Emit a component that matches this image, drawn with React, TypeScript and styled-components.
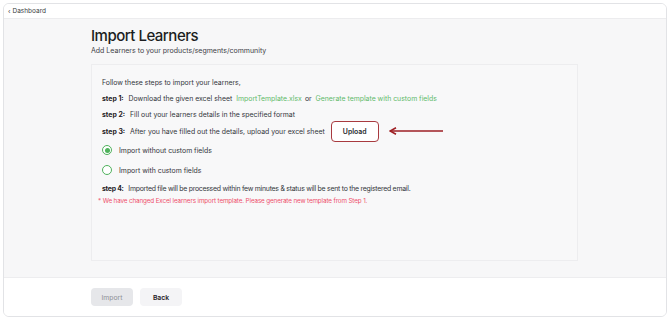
import React from "react";
import styled, { createGlobalStyle } from "styled-components";

const Global = createGlobalStyle`
  html, body { margin: 0; padding: 0; background: #ffffff; }
  body { font-family: Inter, "Noto Sans", Arial, sans-serif; color: #1f2328; }
  * { box-sizing: border-box; }
`;

const Frame = styled.div`
  margin: 3px;
  width: 664px;
  height: 314px;
  border: 1px solid #e2e3e6;
  border-radius: 6px;
  overflow: hidden;
  display: flex;
  flex-direction: column;
  background: #ffffff;
`;

const TopBar = styled.div`
  height: 15px;
  flex: none;
  display: flex;
  align-items: center;
  padding-left: 4px;
  font-size: 6.5px;
  color: #3a3d42;
  background: #ffffff;
  border-bottom: 1px solid #ececee;
  gap: 2px;
`;

const Main = styled.div`
  flex: 1;
  background: #f7f7f8;
  padding: 6px 0 0 87px;
  display: flex;
  flex-direction: column;
`;

const Title = styled.h1`
  margin: 0;
  font-size: 15px;
  line-height: 21px;
  font-weight: 500;
  letter-spacing: -0.5px;
  color: #1c1e21;
`;

const Subtitle = styled.div`
  font-size: 7px;
  line-height: 10px;
  color: #3d4046;
`;

const Panel = styled.div`
  margin-top: 8px;
  width: 487px;
  height: 197px;
  border: 1px solid #ededef;
  background: #f8f8f9;
  padding: 9px 10px 0 10px;
  display: flex;
  flex-direction: column;
`;

const Line = styled.div<{ $h?: number; $tight?: boolean }>`
  display: flex;
  align-items: center;
  height: ${(p) => p.$h ?? 16}px;
  font-size: 6.9px;
  letter-spacing: ${(p) => (p.$tight ? "-0.25px" : "0")};
  color: #33363b;
  white-space: pre;
`;

const StepLabel = styled.b`
  font-weight: 700;
  color: #1e2024;
  margin-right: 3px;
`;

const GreenLink = styled.span`
  color: #5fba6a;
  margin: 0 3px 0 4px;
`;

const UploadButton = styled.button`
  margin-left: 6px;
  width: 48px;
  height: 21px;
  border: 1px solid #a83a3f;
  border-radius: 4px;
  background: #ffffff;
  font-family: inherit;
  font-size: 6.9px;
  font-weight: 600;
  color: #25272b;
  padding: 0;
`;

const Arrow = styled.svg`
  margin-left: 10px;
  flex: none;
`;

const RadioRow = styled.label`
  display: flex;
  align-items: center;
  height: 20px;
  font-size: 6.9px;
  color: #33363b;
  gap: 7px;
`;

const Radio = styled.span<{ $checked?: boolean }>`
  width: 10px;
  height: 10px;
  border-radius: 50%;
  border: 1px solid #4fb25c;
  display: inline-flex;
  align-items: center;
  justify-content: center;
  background: #ffffff;
  &::after {
    content: "";
    width: 5px;
    height: 5px;
    border-radius: 50%;
    background: ${(p) => (p.$checked ? "#4fb25c" : "transparent")};
  }
`;

const Warning = styled.div`
  font-size: 6.3px;
  letter-spacing: -0.13px;
  color: #ee4f6b;
  margin-top: 1px;
  margin-left: -4px;
`;

const Footer = styled.div`
  height: 39px;
  flex: none;
  background: #ffffff;
  border-top: 1px solid #ededef;
  display: flex;
  align-items: center;
  padding-left: 87px;
  gap: 7px;
`;

const FooterButton = styled.button<{ $disabled?: boolean }>`
  width: 42px;
  height: 18px;
  border: none;
  border-radius: 4px;
  font-family: inherit;
  font-size: 6.8px;
  font-weight: ${(p) => (p.$disabled ? 400 : 600)};
  color: ${(p) => (p.$disabled ? "#8e9096" : "#1e2024")};
  background: ${(p) => (p.$disabled ? "#e6e7ea" : "#f4f4f6")};
  padding: 0;
`;

export default function App() {
  return (
    <>
      <Global />
      <Frame>
        <TopBar>
          <span>‹</span>
          <span>Dashboard</span>
        </TopBar>
        <Main>
          <Title>Import Learners</Title>
          <Subtitle>Add Learners to your products/segments/community</Subtitle>
          <Panel>
            <Line>Follow these steps to import your learners,</Line>
            <Line>
              <StepLabel>step 1:</StepLabel> Download the given excel sheet
              <GreenLink>ImportTemplate.xlsx</GreenLink>or
              <GreenLink>Generate template with custom fields</GreenLink>
            </Line>
            <Line>
              <StepLabel>step 2:</StepLabel> Fill out your learners details in the specified format
            </Line>
            <Line $h={18}>
              <StepLabel>step 3:</StepLabel> After you have filled out the details, upload your excel sheet
              <UploadButton>Upload</UploadButton>
              <Arrow width="54" height="8" viewBox="0 0 54 8">
                <path d="M2 4 H54" stroke="#9e1f24" strokeWidth="1.6" fill="none" />
                <path d="M7 0.8 L1 4 L7 7.2" stroke="#9e1f24" strokeWidth="1.6" fill="none" />
              </Arrow>
            </Line>
            <RadioRow>
              <Radio $checked />
              Import without custom fields
            </RadioRow>
            <RadioRow>
              <Radio />
              Import with custom fields
            </RadioRow>
            <Line $tight>
              <StepLabel>step 4:</StepLabel> Imported file will be processed within few minutes &amp; status will be sent to the registered email.
            </Line>
            <Warning>* We have changed Excel learners import template. Please generate new template from Step 1.</Warning>
          </Panel>
        </Main>
        <Footer>
          <FooterButton $disabled>Import</FooterButton>
          <FooterButton>Back</FooterButton>
        </Footer>
      </Frame>
    </>
  );
}
